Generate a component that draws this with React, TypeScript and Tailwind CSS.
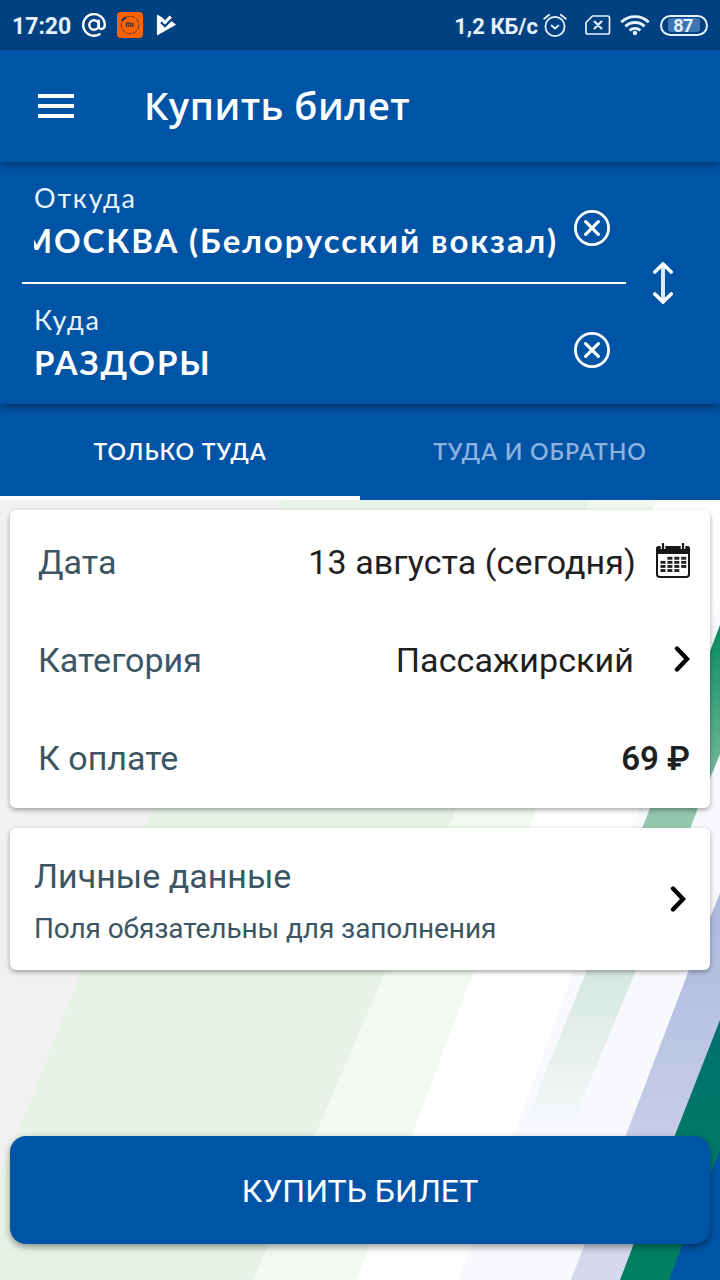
import React, { useState } from "react";

const WHITE = "#ffffff";

const AtIcon = () => (
  <svg className="h-6 w-6" viewBox="0 0 24 24" fill="none" stroke={WHITE} strokeWidth={2.4} strokeLinecap="round">
    <circle cx="12" cy="12" r="4.7" />
    <path d="M16.7 7.6v5.6c0 4 6.1 3.6 6.1-1.2A10.8 10.8 0 1 0 17.5 21.2" />
  </svg>
);

const MiIcon = () => (
  <svg className="h-[26px] w-[26px]" viewBox="0 0 26 26">
    <rect width="26" height="26" rx="4" fill="#ff6200" />
    <circle cx="13" cy="13" r="8.8" fill="none" stroke="#5b3b3b" strokeWidth="1" strokeDasharray="5 1" />
    <path d="M4.8 8.8 8.6 5.2" stroke="#1c3157" strokeWidth="2" />
    <path d="M9.6 15v-3.8h4.2V15M11.7 12.6V15M15.8 10.8V15" fill="none" stroke="#33363f" strokeWidth="1.3" />
  </svg>
);

const PlayCheckIcon = () => (
  <svg className="h-[22px] w-5" viewBox="0 0 20 22">
    <path d="M1.4 1.2 6.5 4.2 9 6.8 13.6 2 16 4.2 14.6 7.2 19.4 10.6 1.4 20.8Z" fill={WHITE} stroke={WHITE} strokeWidth="1" strokeLinejoin="round" />
    <path d="m5 8.2 4 4 8-8.2" fill="none" stroke="#014182" strokeWidth="2.2" />
  </svg>
);

const AlarmIcon = () => (
  <svg className="h-6 w-6" viewBox="0 0 24 24" fill="none" stroke="#e6f1fb" strokeWidth="1.8" strokeLinecap="round" strokeLinejoin="round">
    <circle cx="12" cy="13.5" r="9.6" />
    <path d="m8.6 12.5 3.4 3 3.4-3M1.2 5.7 6.2 1.7M22.8 5.7l-5-4" />
  </svg>
);

const NoSimIcon = () => (
  <svg className="h-5 w-[26px]" viewBox="0 0 26 20" fill="none" stroke="#e6f1fb" strokeWidth="1.7" strokeLinecap="round" strokeLinejoin="round">
    <path d="M7.5 1h15.3q1.7 0 1.7 1.7v14.6q0 1.7-1.7 1.7H2.7Q1 19 1 17.3V7.5Z" />
    <path d="m9.5 6.5 7 7m0-7-7 7" strokeWidth="2.1" />
  </svg>
);

const WifiIcon = () => (
  <svg className="h-[22px] w-[30px]" viewBox="0 0 30 22" fill="none" stroke="#e6f1fb" strokeWidth="2.9">
    <path d="M1.3 8.2a19.6 19.6 0 0 1 27.4 0M5.4 12.4a13.8 13.8 0 0 1 19.2 0M9.6 16.5a8 8 0 0 1 10.8 0" />
    <circle cx="15" cy="19" r="2.2" fill="#e6f1fb" stroke="none" />
  </svg>
);

const ClearIcon = () => (
  <svg className="h-9 w-9" viewBox="0 0 36 36" fill="none" stroke={WHITE}>
    <circle cx="18" cy="18" r="16.6" strokeWidth="2.8" />
    <path d="m11.6 11.6 12.8 12.8m0-12.8L11.6 24.4" strokeWidth="3.2" strokeLinecap="round" />
  </svg>
);

const SwapIcon = () => (
  <svg className="h-[42px] w-5" viewBox="0 0 20 42" fill="none" stroke={WHITE} strokeLinecap="round">
    <path d="M10 3v36" strokeWidth="4" opacity=".88" />
    <path d="m1.8 10 8.2-8 8.2 8M1.8 32l8.2 8 8.2-8" strokeWidth="3.6" />
  </svg>
);

const dayCells = [
  [1, 2, 3],
  [0, 1, 2, 3],
  [0, 1, 2, 3],
  [0, 1, 2],
];

const CalendarIcon = () => (
  <svg className="h-[35px] w-[34px]" viewBox="0 0 34 35">
    <rect x="1" y="4" width="32" height="30" rx="2.8" fill="#fff" stroke="#171717" strokeWidth="2" />
    <path d="M0 11V6q0-3 3-3h28q3 0 3 3v5Z" fill="#171717" />
    <path d="M7 0v6M27 0v6" stroke="#fff" strokeWidth="4.6" />
    <path d="M7 1v4.4M27 1v4.4" stroke="#171717" strokeWidth="2.2" strokeLinecap="round" />
    {dayCells.map((row, r) =>
      row.map((c) => (
        <rect key={`${r}-${c}`} x={4.5 + c * 6.9} y={13.8 + r * 4.1} width="5" height="2.9" fill="#222" />
      ))
    )}
  </svg>
);

const ChevronIcon = () => (
  <svg className="h-[26px] w-4" viewBox="0 0 16 26" fill="none" stroke="#000" strokeWidth="4.4" strokeLinecap="round">
    <path d="m3 2.6 10 10.4L3 23.4" />
  </svg>
);

// диагональные полосы под карточками
const Stripes = () => (
  <svg className="absolute inset-0 h-full w-full" viewBox="0 500 720 780" preserveAspectRatio="none">
    <defs>
      <linearGradient id="green" gradientUnits="userSpaceOnUse" x1="0" y1="620" x2="0" y2="1130">
        <stop offset="0" stopColor="#008a5c" />
        <stop offset=".38" stopColor="#93c5ad" />
        <stop offset=".7" stopColor="#d6e8df" />
        <stop offset="1" stopColor="#f8f9fc" />
      </linearGradient>
      <linearGradient id="lavender" gradientUnits="userSpaceOnUse" x1="0" y1="890" x2="0" y2="1280">
        <stop offset="0" stopColor="#acb8df" />
        <stop offset="1" stopColor="#d7daee" />
      </linearGradient>
      <linearGradient id="teal" gradientUnits="userSpaceOnUse" x1="0" y1="1020" x2="0" y2="1260">
        <stop offset="0" stopColor="#00706f" />
        <stop offset="1" stopColor="#008062" />
      </linearGradient>
    </defs>
    <rect y="500" width="720" height="780" fill="#f1f1f1" />
    <path d="M282 500H720V1280H0V1176L17 1135 82 970 153 808Z" fill="#e6f3e6" />
    <path d="M590 500H720V1280H253L315 1135 386 970 457 808Z" fill="#f1f9f1" />
    <path d="M656 500H720V1280H356L412 1135 474 970 537 808Z" fill="#fff" />
    <path d="M720 603V1280H458L514 1135 574 970 640 808Z" fill="#f8f9fc" />
    <path d="M720 625V754L698 808 636 970 568 1135H520L587 970 650 808Z" fill="url(#green)" />
    <path d="M720 893V1280H571L626 1135 689 970Z" fill="url(#lavender)" />
    <path d="M720 1020V1280H620L675 1135Z" fill="url(#teal)" />
    <path d="M720 1150V1280H669L683 1243Z" fill="#0054a6" />
  </svg>
);

interface RouteFieldProps {
  label: string;
  value: string;
  scrolled?: boolean;
}

// длинное название прокручено к концу, начало обрезается
const RouteField: React.FC<RouteFieldProps> = ({ label, value, scrolled }) => (
  <div className="flex h-[120px] pl-3">
    <div className="flex w-[524px] flex-col overflow-hidden">
      <span className="mt-5 h-8 text-[27px] leading-8 tracking-[1.8px] text-[#e9f4ff]">{label}</span>
      <div
        className={`mt-1 flex h-11 text-[33px] leading-[44px] font-bold tracking-[1.9px] whitespace-nowrap ${
          scrolled ? "justify-end" : ""
        }`}
      >
        <span className="shrink-0">{value}</span>
      </div>
    </div>
    <button className="mt-12 ml-4 h-9 w-9">
      <ClearIcon />
    </button>
  </div>
);

const tabs = ["ТОЛЬКО ТУДА", "ТУДА И ОБРАТНО"];

const App: React.FC = () => {
  const [active, setActive] = useState(0);

  return (
    <div className="flex h-[1280px] w-[720px] flex-col overflow-hidden bg-[#0054a6] font-['Roboto','Noto_Sans',sans-serif]">
      {/* статус-бар */}
      <div className="flex h-[50px] shrink-0 items-center bg-[#014182] text-[23px] font-bold text-[#e6f1fb]">
        <span className="ml-3 w-[58px] pt-1 whitespace-nowrap">17:20</span>
        <span className="ml-3"><AtIcon /></span>
        <span className="ml-[11px]"><MiIcon /></span>
        <span className="ml-[13px]"><PlayCheckIcon /></span>
        <span className="ml-auto pt-[3px] text-[22px] whitespace-nowrap">1,2 КБ/с</span>
        <span className="ml-[5px]"><AlarmIcon /></span>
        <span className="ml-[18px]"><NoSimIcon /></span>
        <span className="ml-[9px]"><WifiIcon /></span>
        <span className="mr-[12px] ml-[10px] flex h-[21px] w-[48px] items-center rounded-full border-2 border-[#e6f1fb] px-[6px]">
          <span className="flex h-[14px] w-full items-center justify-center rounded-[3px] bg-[#3d77b3] pr-0.5 text-[18px] tracking-[-0.5px]">87</span>
        </span>
      </div>

      <header className="relative z-20 flex h-28 shrink-0 items-center bg-[#0054a6] pl-[38px] text-white shadow-[0_3px_8px_rgba(0,0,0,0.35)]">
        <button className="flex h-6 w-9 flex-col justify-between">
          <span className="h-1 w-full bg-white" />
          <span className="h-1 w-full bg-white" />
          <span className="h-1 w-full bg-white" />
        </button>
        <h1 className="ml-[70px] pb-0.5 font-['Open_Sans',sans-serif] text-[38px] font-semibold tracking-[0.5px] whitespace-nowrap">
          Купить билет
        </h1>
      </header>

      <section className="relative z-10 flex h-[242px] shrink-0 bg-[#0054a6] pl-[22px] font-['Lato','Open_Sans',sans-serif] text-white shadow-[0_3px_8px_rgba(0,0,0,0.4)]">
        <div className="w-[604px]">
          <RouteField label="Откуда" value="МОСКВА (Белорусский вокзал)" scrolled />
          <div className="h-0.5 bg-white" />
          <RouteField label="Куда" value="РАЗДОРЫ" />
        </div>
        <button className="mt-[100px] ml-[27px] h-[42px] w-5">
          <SwapIcon />
        </button>
      </section>

      <nav className="grid h-24 shrink-0 grid-cols-2 bg-[#0054a6] font-['Lato','Open_Sans',sans-serif] text-[23px] font-semibold tracking-[1px]">
        {tabs.map((tab, i) => (
          <button
            key={tab}
            onClick={() => setActive(i)}
            className={
              i === active
                ? "border-b-4 border-white pt-[3px] text-white"
                : "border-b-4 border-transparent pt-[3px] text-[#8cb2df]"
            }
          >
            {tab}
          </button>
        ))}
      </nav>

      <main className="relative flex-1">
        <Stripes />
        <div className="relative flex h-full flex-col px-2.5 pt-2.5 text-[34px] text-[#3c5563]">
          <div className="h-[298px] rounded-md bg-white px-7 pt-[3px] shadow-[0_2px_5px_rgba(0,0,0,0.35)]">
            <div className="-mr-2 flex h-[98px] items-center">
              <span>Дата</span>
              <span className="ml-auto tracking-[0.1px] text-[#1f1f1f]">13 августа (сегодня)</span>
              <span className="mb-[3px] ml-5"><CalendarIcon /></span>
            </div>
            <div className="-mr-2 flex h-[98px] items-center">
              <span>Категория</span>
              <span className="ml-auto tracking-[0.1px] text-[#1f1f1f]">Пассажирский</span>
              <span className="mb-[3px] ml-10"><ChevronIcon /></span>
            </div>
            <div className="-mr-2 flex h-[98px] items-center">
              <span>К оплате</span>
              <span className="ml-auto pt-0.5 text-[33px] font-semibold text-[#1f1f1f]">69 ₽</span>
            </div>
          </div>

          <div className="mt-5 flex h-[142px] items-center rounded-md bg-white pr-6 pl-6 shadow-[0_2px_5px_rgba(0,0,0,0.35)]">
            <div className="flex flex-col pt-1.5">
              <span className="leading-[52px]">Личные данные</span>
              <span className="pt-px text-[28px] leading-[52px] tracking-[-0.1px]">Поля обязательны для заполнения</span>
            </div>
            <span className="ml-auto"><ChevronIcon /></span>
          </div>

          <button className="mt-[166px] h-[108px] rounded-2xl bg-[#0054a6] pt-0.5 text-[32px] text-white shadow-[0_3px_7px_rgba(0,0,0,0.4)]">
            КУПИТЬ БИЛЕТ
          </button>
        </div>
      </main>
    </div>
  );
};

export default App;
